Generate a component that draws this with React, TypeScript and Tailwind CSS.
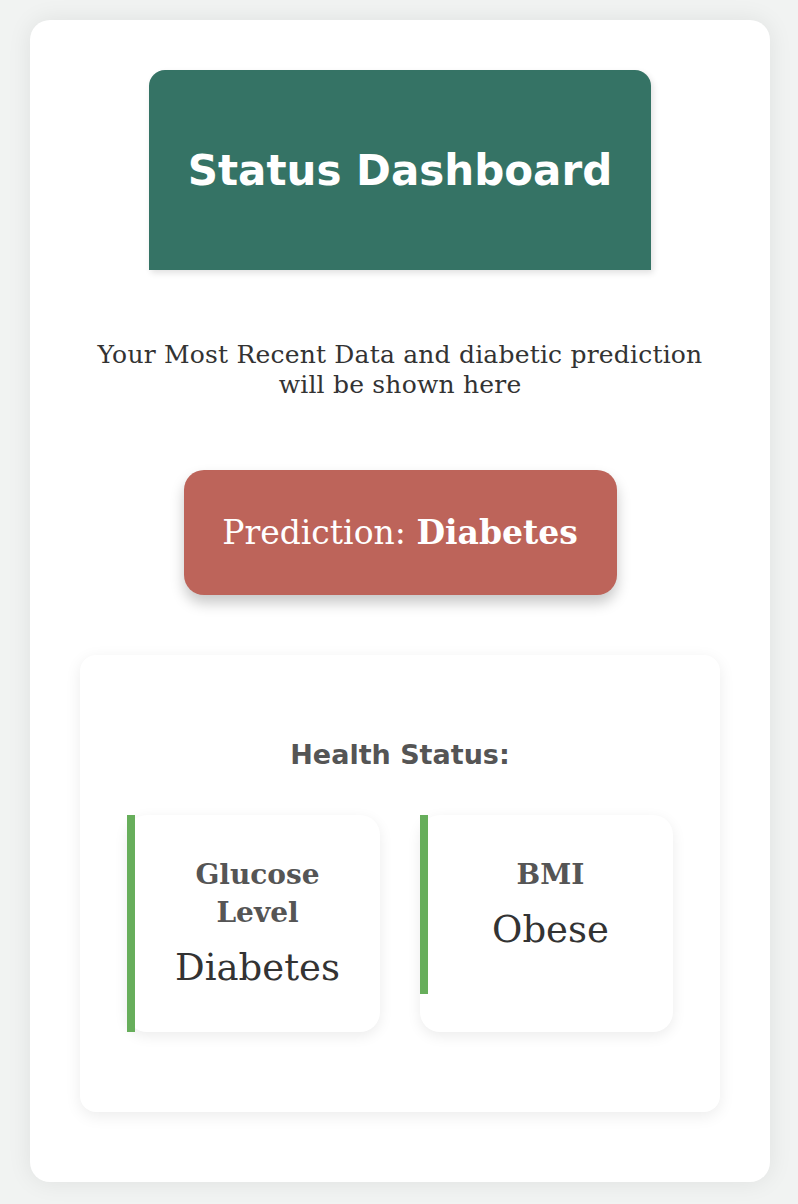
const serif = "font-['DejaVu_Serif','Liberation_Serif',serif]";
const sans = "font-['DejaVu_Sans','Inter',sans-serif]";

interface StatusCardProps {
    label: string;
    value: string;
}

function StatusCard({ label, value }: StatusCardProps) {
    return (
        <div className="w-[253px] rounded-[20px] bg-white shadow-[0_4px_14px_rgba(0,0,0,0.08)] flex items-start">
            <div className="w-full border-l-8 border-[#67ae5b] pt-[41px] pb-[42px] px-6 text-center">
                <p className={`${serif} text-[28px] leading-[38px] font-bold text-[#555555]`}>{label}</p>
                <p className={`${serif} text-[37px] leading-[44px] text-[#333333] mt-[14px]`}>{value}</p>
            </div>
        </div>
    );
}

export default function App() {
    return (
        <div className="min-h-screen bg-[#f1f3f2] pl-[30px] pr-[28px] pt-[20px] pb-[22px]">
            <div className="bg-white rounded-[20px] shadow-[0_0_24px_rgba(0,0,0,0.08)] pt-[50px] pb-[70px] flex flex-col items-center">
                <div className="w-[502px] h-[200px] bg-[#357365] rounded-t-[16px] shadow-[2px_3px_6px_rgba(0,0,0,0.12)] flex items-center justify-center">
                    <h1 className={`${sans} text-[42px] font-bold text-white`}>Status Dashboard</h1>
                </div>

                <p className={`${serif} text-[25px] leading-[30px] tracking-[0.2px] text-[#333333] text-center mt-[70px]`}>
                    Your Most Recent Data and diabetic prediction
                    <br />
                    will be shown here
                </p>

                <div className="mt-[70px] w-[433px] h-[125px] bg-[#bd645a] rounded-[20px] shadow-[0_8px_14px_rgba(0,0,0,0.22)] flex items-center justify-center">
                    <p className={`${serif} text-[33px] text-white`}>
                        Prediction: <span className="font-bold">Diabetes</span>
                    </p>
                </div>

                <div className="mt-[60px] w-[640px] rounded-[16px] bg-white shadow-[0_4px_16px_rgba(0,0,0,0.08)] pt-[83px] pb-[80px] flex flex-col items-center">
                    <h2 className={`${sans} text-[27px] leading-[34px] font-bold text-[#555555]`}>Health Status:</h2>
                    <div className="mt-[43px] flex gap-[40px] items-stretch">
                        <StatusCard label="Glucose Level" value="Diabetes" />
                        <StatusCard label="BMI" value="Obese" />
                    </div>
                </div>
            </div>
        </div>
    );
}
